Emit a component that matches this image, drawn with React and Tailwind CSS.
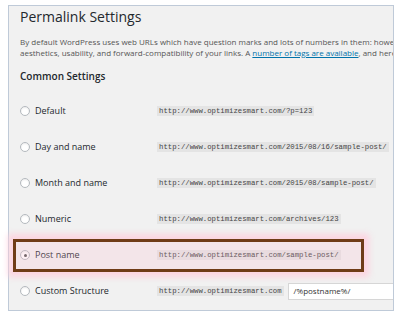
import React from "react";

// permalink structure options shown in the settings panel
const OPTIONS = [
  { label: "Default", url: "http://www.optimizesmart.com/?p=123" },
  { label: "Day and name", url: "http://www.optimizesmart.com/2015/08/16/sample-post/" },
  { label: "Month and name", url: "http://www.optimizesmart.com/2015/08/sample-post/" },
  { label: "Numeric", url: "http://www.optimizesmart.com/archives/123" },
  { label: "Post name", url: "http://www.optimizesmart.com/sample-post/", checked: true },
];

function Radio({ checked }) {
  return (
    <span className="w-[10px] h-[10px] shrink-0 rounded-full border border-[#b4b9be] bg-white shadow-[inset_0_1px_2px_rgba(0,0,0,0.08)] flex items-center justify-center">
      {checked && <span className="w-[3px] h-[3px] rounded-full bg-[#555]" />}
    </span>
  );
}

function Code({ children }) {
  return (
    <code className="h-[10px] px-[2px] bg-[#e4e4e4] text-[#444] font-['Liberation_Mono',monospace] text-[7.3px] leading-[10px] whitespace-nowrap">
      {children}
    </code>
  );
}

export default function App() {
  return (
    <div className="relative w-[397px] h-[317px] bg-white overflow-hidden font-['Open_Sans',sans-serif]">
      <div className="ml-[8px] mt-[5px] w-[386px] h-[306px] border border-[#bfcad8] bg-[#f1f1f1] overflow-hidden pl-[11px] pt-[1px]">
        <h1 className="text-[14px] leading-[20px] text-[#23282d]">Permalink Settings</h1>

        <div className="mt-[10px] text-[8px] leading-[10.5px] text-[#555] whitespace-nowrap">
          <p>
            By default WordPress uses web URLs which have question marks and lots of numbers in them: however, WordPress offers you the ability
          </p>
          <p>
            aesthetics, usability, and forward-compatibility of your links. A{" "}
            <a className="text-[#0073aa] underline">number of tags are available</a>, and here are some examples to get you started.
          </p>
        </div>

        <h2 className="mt-[11px] text-[10px] leading-[14px] font-semibold text-[#23282d]">Common Settings</h2>

        <div className="mt-[10px] flex flex-col">
          {OPTIONS.map((o) => (
            <div key={o.label} className="h-[36px] flex items-center">
              <div className="w-[137px] flex items-center gap-[5px]">
                <Radio checked={o.checked} />
                <span className="text-[9px] font-medium text-[#23282d]">{o.label}</span>
              </div>
              <Code>{o.url}</Code>
            </div>
          ))}
          <div className="h-[36px] flex items-center">
            <div className="w-[137px] flex items-center gap-[5px]">
              <Radio />
              <span className="text-[9px] font-medium text-[#23282d]">Custom Structure</span>
            </div>
            <Code>http://www.optimizesmart.com</Code>
            <div className="ml-[4px] flex-1 h-[17px] bg-white border-y border-l border-[#d6d6d6] pl-[5px] flex items-center text-[8px] text-[#333]">
              /%postname%/
            </div>
          </div>
        </div>
      </div>

      {/* highlight around the selected option */}
      <div className="absolute left-[13px] top-[239px] w-[351px] h-[33px] border-[3px] border-[#6f3c17] bg-[rgba(255,185,205,0.2)] shadow-[0_0_6px_5px_rgba(255,205,220,0.8)]" />
    </div>
  );
}
